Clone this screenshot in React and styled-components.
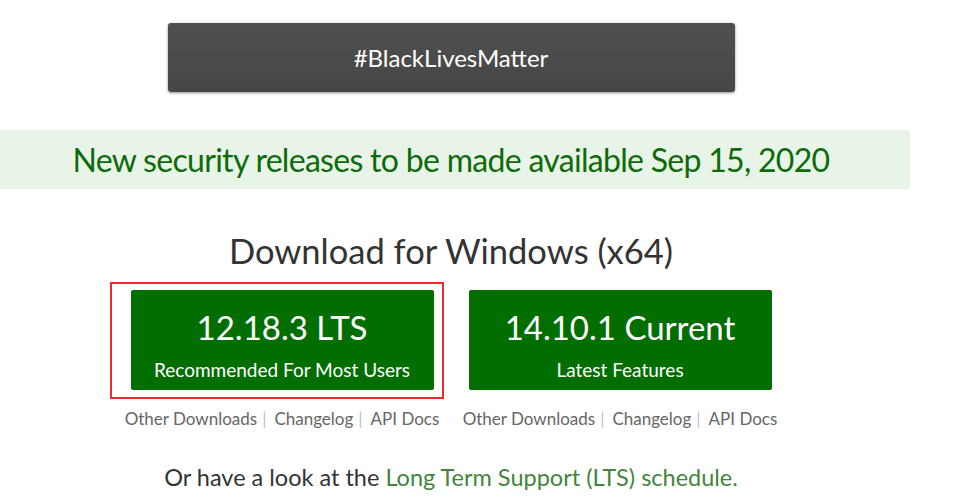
import styled, { createGlobalStyle } from 'styled-components';

const GlobalStyle = createGlobalStyle`
  body {
    margin: 0;
    background: #fff;
    font-family: Lato, "Open Sans", sans-serif;
    color: #333;
  }
`;

const Page = styled.main`
  width: 902px;
  padding-top: 23px;
  display: flex;
  flex-direction: column;
  align-items: center;
`;

const BlmButton = styled.a`
  width: 567px;
  height: 69px;
  display: flex;
  align-items: center;
  justify-content: center;
  background: linear-gradient(#505050, #464646);
  border-radius: 3px;
  box-shadow: 0 1px 3px rgba(0, 0, 0, 0.45);
  color: #fff;
  font-size: 24px;
  text-decoration: none;
`;

const Notice = styled.div`
  align-self: flex-start;
  width: 910px;
  height: 59px;
  box-sizing: border-box;
  padding-right: 8px;
  margin-top: 38px;
  display: flex;
  align-items: center;
  justify-content: center;
  background: #e9f4e8;
  border-radius: 0 3px 3px 0;
  color: #0d6b0a;
  font-size: 32px;
  letter-spacing: -0.7px;
`;

const Heading = styled.h1`
  margin: 40px 0 0;
  font-size: 34.5px;
  font-weight: 400;
  line-height: 44px;
  color: #333;
`;

const Downloads = styled.div`
  display: flex;
  gap: 25px;
  margin-top: 17px;
`;

const Release = styled.div`
  position: relative;
  width: 313px;
  display: flex;
  flex-direction: column;
  align-items: center;
`;

const Highlight = styled.div`
  position: absolute;
  left: -16px;
  right: -5px;
  top: -8px;
  height: 117px;
  border: 2px solid #ee2a2f;
  box-sizing: border-box;
  pointer-events: none;
`;

const ReleaseButton = styled.a`
  width: 303px;
  height: 100px;
  box-sizing: border-box;
  padding-top: 17px;
  display: flex;
  flex-direction: column;
  align-items: center;
  background: #026e00;
  border-radius: 2px;
  color: #fff;
  text-decoration: none;
`;

const Version = styled.span`
  font-size: 33px;
  line-height: 40px;
`;

const Label = styled.span`
  margin-top: 12px;
  font-size: 19px;
  line-height: 22px;
`;

const LinkRow = styled.div`
  margin-top: 18px;
  display: flex;
  align-items: center;
  white-space: nowrap;
  font-size: 17px;
  line-height: 22px;
  color: #666;
`;

const Sep = styled.span`
  margin: 0 8px 0 5px;
  color: #b8c4d0;
`;

const Footer = styled.p`
  margin: 33px 0 0;
  font-size: 23.5px;
  line-height: 28px;
  color: #333;

  a {
    color: #43853d;
    text-decoration: none;
  }
`;

function ReleaseBox({ version, label, highlighted }) {
  return (
    <Release>
      {highlighted && <Highlight />}
      <ReleaseButton href="#">
        <Version>{version}</Version>
        <Label>{label}</Label>
      </ReleaseButton>
      <LinkRow>
        Other Downloads<Sep>|</Sep>Changelog<Sep>|</Sep>API Docs
      </LinkRow>
    </Release>
  );
}

export default function App() {
  return (
    <>
      <GlobalStyle />
      <Page>
        <BlmButton href="#">#BlackLivesMatter</BlmButton>
        <Notice>New security releases to be made available Sep 15, 2020</Notice>
        <Heading>Download for Windows (x64)</Heading>
        <Downloads>
          <ReleaseBox version="12.18.3 LTS" label="Recommended For Most Users" highlighted />
          <ReleaseBox version="14.10.1 Current" label="Latest Features" />
        </Downloads>
        <Footer>
          Or have a look at the <a href="#">Long Term Support (LTS) schedule.</a>
        </Footer>
      </Page>
    </>
  );
}
